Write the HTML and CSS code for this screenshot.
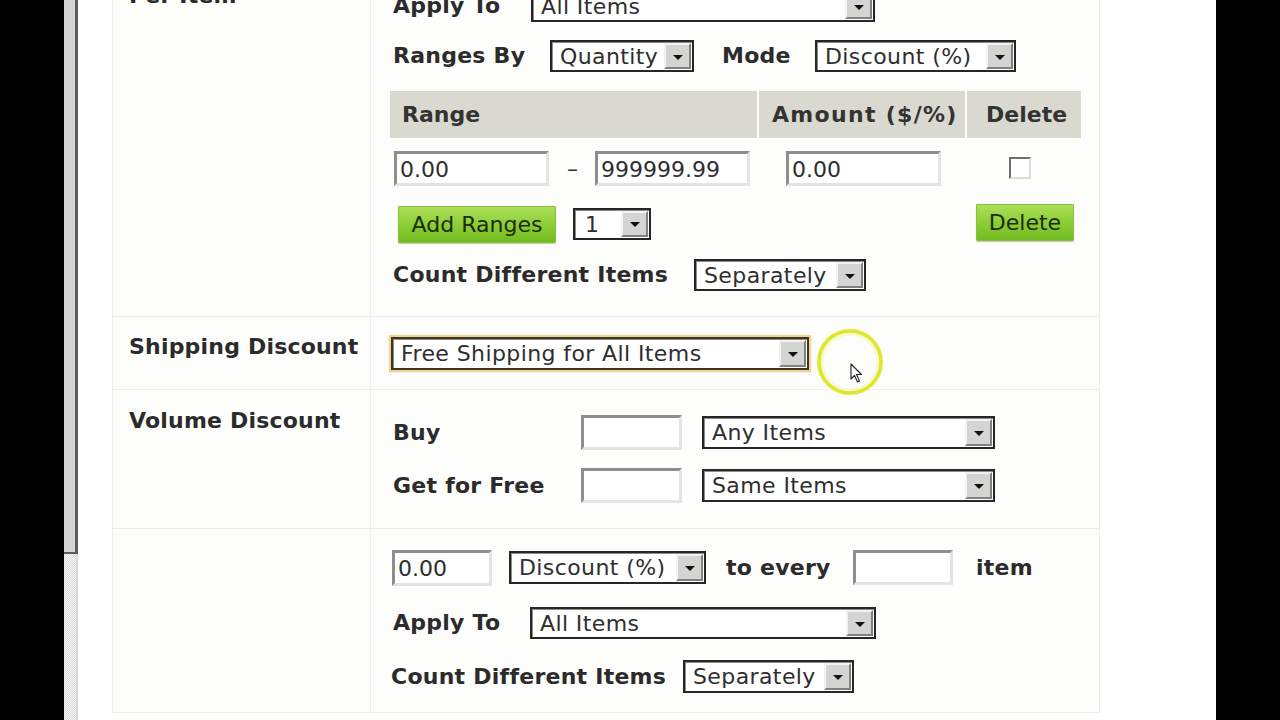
FILE: index.html
```html
<!DOCTYPE html>
<html>
<head>
<meta charset="utf-8">
<link rel="stylesheet" href="styles.css">
</head>
<body>
<div class="screen">
  <div class="bezel"></div>
  <div class="scrollbar"><div class="thumb"></div><div class="track"></div></div>
  <div class="page">
    <div class="form">
      <!-- Per Item -->
      <div class="row r1">
        <div class="lab">Per Item</div>
        <div class="cnt">
          <div class="line">
            <span class="tl w140">Apply To</span>
            <div class="sel w344"><span class="val">All Items</span><span class="btn"></span></div>
          </div>
          <div class="line mt18">
            <span class="tl w159">Ranges By</span>
            <div class="sel w144"><span class="val">Quantity</span><span class="btn"></span></div>
            <span class="tl ml26 w95">Mode</span>
            <div class="sel w201"><span class="val">Discount (%)</span><span class="btn"></span></div>
          </div>
          <div class="rgrid head">
            <div class="hc">Range</div>
            <div class="hc amt">Amount ($/%)</div>
            <div class="hc del">Delete</div>
          </div>
          <div class="rgrid body">
            <div class="bc c1">
              <input class="inp w155" type="text" value="0.00">
              <span class="dash">–</span>
              <input class="inp w155" type="text" value="999999.99">
            </div>
            <div class="bc c2"><input class="inp w155" type="text" value="0.00"></div>
            <div class="bc c3"><span class="chk"></span></div>
          </div>
          <div class="rgrid btns">
            <div class="bc b1">
              <button class="gbtn add">Add Ranges</button>
              <div class="sel w78 one"><span class="val">1</span><span class="btn"></span></div>
            </div>
            <div class="bc"></div>
            <div class="bc b3"><button class="gbtn delb">Delete</button></div>
          </div>
          <div class="line mt16">
            <span class="tl w303">Count Different Items</span>
            <div class="sel w172"><span class="val">Separately</span><span class="btn"></span></div>
          </div>
        </div>
      </div>
      <!-- Shipping -->
      <div class="row r2">
        <div class="lab">Shipping Discount</div>
        <div class="cnt">
          <div class="sel w418 h33 focus"><span class="val">Free Shipping for All Items</span><span class="btn"></span></div>
        </div>
      </div>
      <!-- Volume -->
      <div class="row r3">
        <div class="lab">Volume Discount</div>
        <div class="cnt">
          <div class="vline">
            <span class="tl w190">Buy</span>
            <input class="inp w101" type="text" value="">
            <div class="sel w293 h33 ml20"><span class="val">Any Items</span><span class="btn"></span></div>
          </div>
          <div class="vline mt18">
            <span class="tl w190">Get for Free</span>
            <input class="inp w101" type="text" value="">
            <div class="sel w293 h33 ml20"><span class="val">Same Items</span><span class="btn"></span></div>
          </div>
        </div>
      </div>
      <!-- Volume options -->
      <div class="row r4">
        <div class="lab"></div>
        <div class="cnt">
          <div class="vline">
            <input class="inp w100 first" type="text" value="0.00">
            <div class="sel w197 h33 ml17"><span class="val">Discount (%)</span><span class="btn"></span></div>
            <span class="tl ml18 w129">to every</span>
            <input class="inp w100" type="text" value="">
            <span class="tl ml21">item</span>
          </div>
          <div class="line mt22">
            <span class="tl w139">Apply To</span>
            <div class="sel w346"><span class="val">All Items</span><span class="btn"></span></div>
          </div>
          <div class="line mt21 h33l">
            <span class="tl w294 shift">Count Different Items</span>
            <div class="sel w171 h33"><span class="val">Separately</span><span class="btn"></span></div>
          </div>
        </div>
      </div>
    </div>
    <div class="cursor">
      <svg width="80" height="80" viewBox="0 0 80 80">
        <circle cx="40" cy="40" r="30" fill="none" stroke="#f3f6b0" stroke-width="7" opacity="0.6"/>
        <circle cx="40" cy="40" r="31" fill="none" stroke="#dfe62c" stroke-width="3.5"/>
        <path d="M41 42 L41 57 L44.5 53.5 L47.5 60 L49.5 59 L46.5 52.5 L51.5 52.5 Z" fill="#fff" stroke="#222" stroke-width="1.1" stroke-linejoin="round"/>
      </svg>
    </div>
  </div>
  <div class="bezel"></div>
</div>
</body>
</html>
```
FILE: styles.css
```css
html, body {
  margin: 0;
  padding: 0;
  background: #000;
}
body {
  width: 1280px;
  height: 720px;
  overflow: hidden;
  font-family: "DejaVu Sans", Verdana, sans-serif;
  font-size: 22px;
  color: #2b2b2b;
}
.screen {
  display: flex;
  height: 720px;
}
.bezel {
  width: 64px;
  background: #000;
  flex: none;
}
.scrollbar {
  width: 14px;
  flex: none;
  display: flex;
  flex-direction: column;
  background: #fff;
}
.thumb {
  height: 554px;
  background: #d5d5d5;
  border-right: 3px solid #5c5c5c;
  border-bottom: 2px solid #5c5c5c;
  box-sizing: border-box;
}
.track {
  flex: 1;
  background-color: #f2f2f2;
  background-image: repeating-conic-gradient(#dcdcdc 0 25%, #f8f8f8 0 50%);
  background-size: 2px 2px;
  border-right: 2px solid #d8d8d8;
}
.page {
  position: relative;
  width: 1138px;
  flex: none;
  background: #fefefe;
  overflow: hidden;
  padding-left: 34px;
  box-sizing: border-box;
}
.form {
  width: 988px;
  margin-top: -35px;
  border: 1px solid #efeee7;
  box-sizing: border-box;
  background: #fdfdfc;
}
.row {
  display: flex;
  border-bottom: 1px solid #efeee7;
}
.row.r4 {
  border-bottom: none;
}
.lab {
  width: 258px;
  flex: none;
  box-sizing: border-box;
  border-right: 1px solid #efeee7;
  padding: 17px 0 0 16px;
  font-weight: bold;
  line-height: 26px;
  letter-spacing: 0.2px;
  white-space: nowrap;
}
.r3 .lab { padding-top: 18px; }
.cnt {
  flex: 1;
  padding-left: 20px;
}
.r1 .cnt { padding-top: 24px; padding-bottom: 25px; }
.r2 .cnt { padding-top: 20px; padding-bottom: 19px; }
.r3 .cnt { padding-top: 25px; padding-bottom: 25px; }
.r4 .cnt { padding-top: 21px; padding-bottom: 19px; }

.line, .vline {
  display: flex;
  align-items: center;
  height: 32px;
}
.vline { height: 35px; }
.h33l { height: 33px; }
.tl {
  font-weight: bold;
  line-height: 26px;
  letter-spacing: 0.25px;
  white-space: nowrap;
  padding-left: 2px;
  box-sizing: border-box;
  flex: none;
}
.shift { margin-left: -2px; }
.mt16 { margin-top: 16px; }
.mt18 { margin-top: 18px; }
.mt21 { margin-top: 21px; }
.mt22 { margin-top: 22px; }
.ml17 { margin-left: 17px; }
.ml18 { margin-left: 18px; }
.ml20 { margin-left: 20px; }
.ml21 { margin-left: 21px; }
.ml26 { margin-left: 26px; }
.w78 { width: 78px; }
.w95 { width: 95px; }
.w100 { width: 100px; }
.w101 { width: 101px; }
.w129 { width: 129px; }
.w139 { width: 139px; }
.w140 { width: 140px; }
.w144 { width: 144px; }
.w155 { width: 155px; }
.w159 { width: 159px; }
.w171 { width: 171px; }
.w172 { width: 172px; }
.w190 { width: 190px; }
.w197 { width: 197px; }
.w201 { width: 201px; }
.w293 { width: 293px; }
.w294 { width: 294px; }
.w303 { width: 303px; }
.w344 { width: 344px; }
.w346 { width: 346px; }
.w418 { width: 418px; }

/* select look-alike */
.sel {
  display: flex;
  flex: none;
  height: 32px;
  box-sizing: border-box;
  border: 2px solid #262626;
  box-shadow: inset 1px 1px 0 #8c8c8c;
  background: #fff;
}
.sel.h33 { height: 33px; }
.sel .val {
  flex: 1;
  padding: 1px 0 0 8px;
  line-height: 28px;
  letter-spacing: 0.4px;
  white-space: nowrap;
  overflow: hidden;
  color: #2e2e2e;
}
.sel.one .val { padding-left: 10px; }
.sel .btn {
  width: 27px;
  flex: none;
  margin: 1px 1px 1px 0;
  box-sizing: border-box;
  background: #d4d4d2;
  border: 2px solid;
  border-color: #f2f2f2 #808080 #808080 #f2f2f2;
  display: flex;
  align-items: center;
  justify-content: center;
}
.sel .btn::after {
  content: "";
  width: 0;
  height: 0;
  border-left: 5px solid transparent;
  border-right: 5px solid transparent;
  border-top: 5px solid #111;
  margin-top: 2px;
}
.sel.focus {
  border-color: #3e3522;
  box-shadow: 0 0 1px 2px #ecd595, inset 1px 1px 0 #8c8c8c;
}

/* text input */
.inp {
  flex: none;
  height: 35px;
  box-sizing: border-box;
  border: 3px solid;
  border-color: #8e8e8e #e4e4e4 #e4e4e4 #8e8e8e;
  background: #fff;
  font-family: "DejaVu Sans", Verdana, sans-serif;
  font-size: 22px;
  color: #2e2e2e;
  padding: 1px 0 0 3px;
  margin: 0;
  outline: none;
}
.vline .inp.first { margin-left: 1px; height: 36px; }

/* range table */
.rgrid {
  display: grid;
  grid-template-columns: 367px 206px 114px;
  column-gap: 2px;
  margin-left: -1px;
}
.rgrid.head {
  margin-top: 19px;
  height: 47px;
}
.hc {
  background: #d9d9d0;
  font-weight: bold;
  line-height: 26px;
  display: flex;
  align-items: center;
  padding: 1px 0 0 12px;
  color: #333;
  white-space: nowrap;
}
.hc.amt { padding-left: 13px; letter-spacing: 1.3px; }
.hc.del { padding-left: 19px; }
.rgrid.body {
  margin-top: 13px;
  height: 35px;
}
.bc {
  display: flex;
  align-items: center;
}
.c1 { padding-left: 4px; }
.c2 { padding-left: 27px; }
.c3 { padding-left: 42px; }
.dash {
  margin: 0 17px 0 18px;
  color: #333;
}
.chk {
  width: 22px;
  height: 22px;
  box-sizing: border-box;
  border: 2px solid;
  border-color: #6e6e6e #dcdcdc #dcdcdc #6e6e6e;
  background: #fff;
  margin-top: -2px;
}
.rgrid.btns {
  margin-top: 18px;
  height: 39px;
}
.b1 { padding-left: 8px; }
.b3 { padding-left: 9px; align-items: flex-start; }
.gbtn {
  font-family: "DejaVu Sans", Verdana, sans-serif;
  font-size: 22px;
  color: #1c2c0b;
  background: linear-gradient(#acdf58 0%, #8fd03a 45%, #72bb1f 100%);
  border: 1px solid #86c03e;
  border-radius: 1px;
  margin: 0;
  padding: 0;
  box-sizing: border-box;
  box-shadow: 0 1px 1px rgba(80,120,20,0.35);
}
.gbtn.add {
  width: 158px;
  height: 37px;
  align-self: flex-end;
}
.gbtn.delb {
  width: 98px;
  height: 37px;
}
.b1 .sel.one { margin-left: 17px; }

.cursor {
  position: absolute;
  left: 732px;
  top: 322px;
  width: 80px;
  height: 80px;
}
```
